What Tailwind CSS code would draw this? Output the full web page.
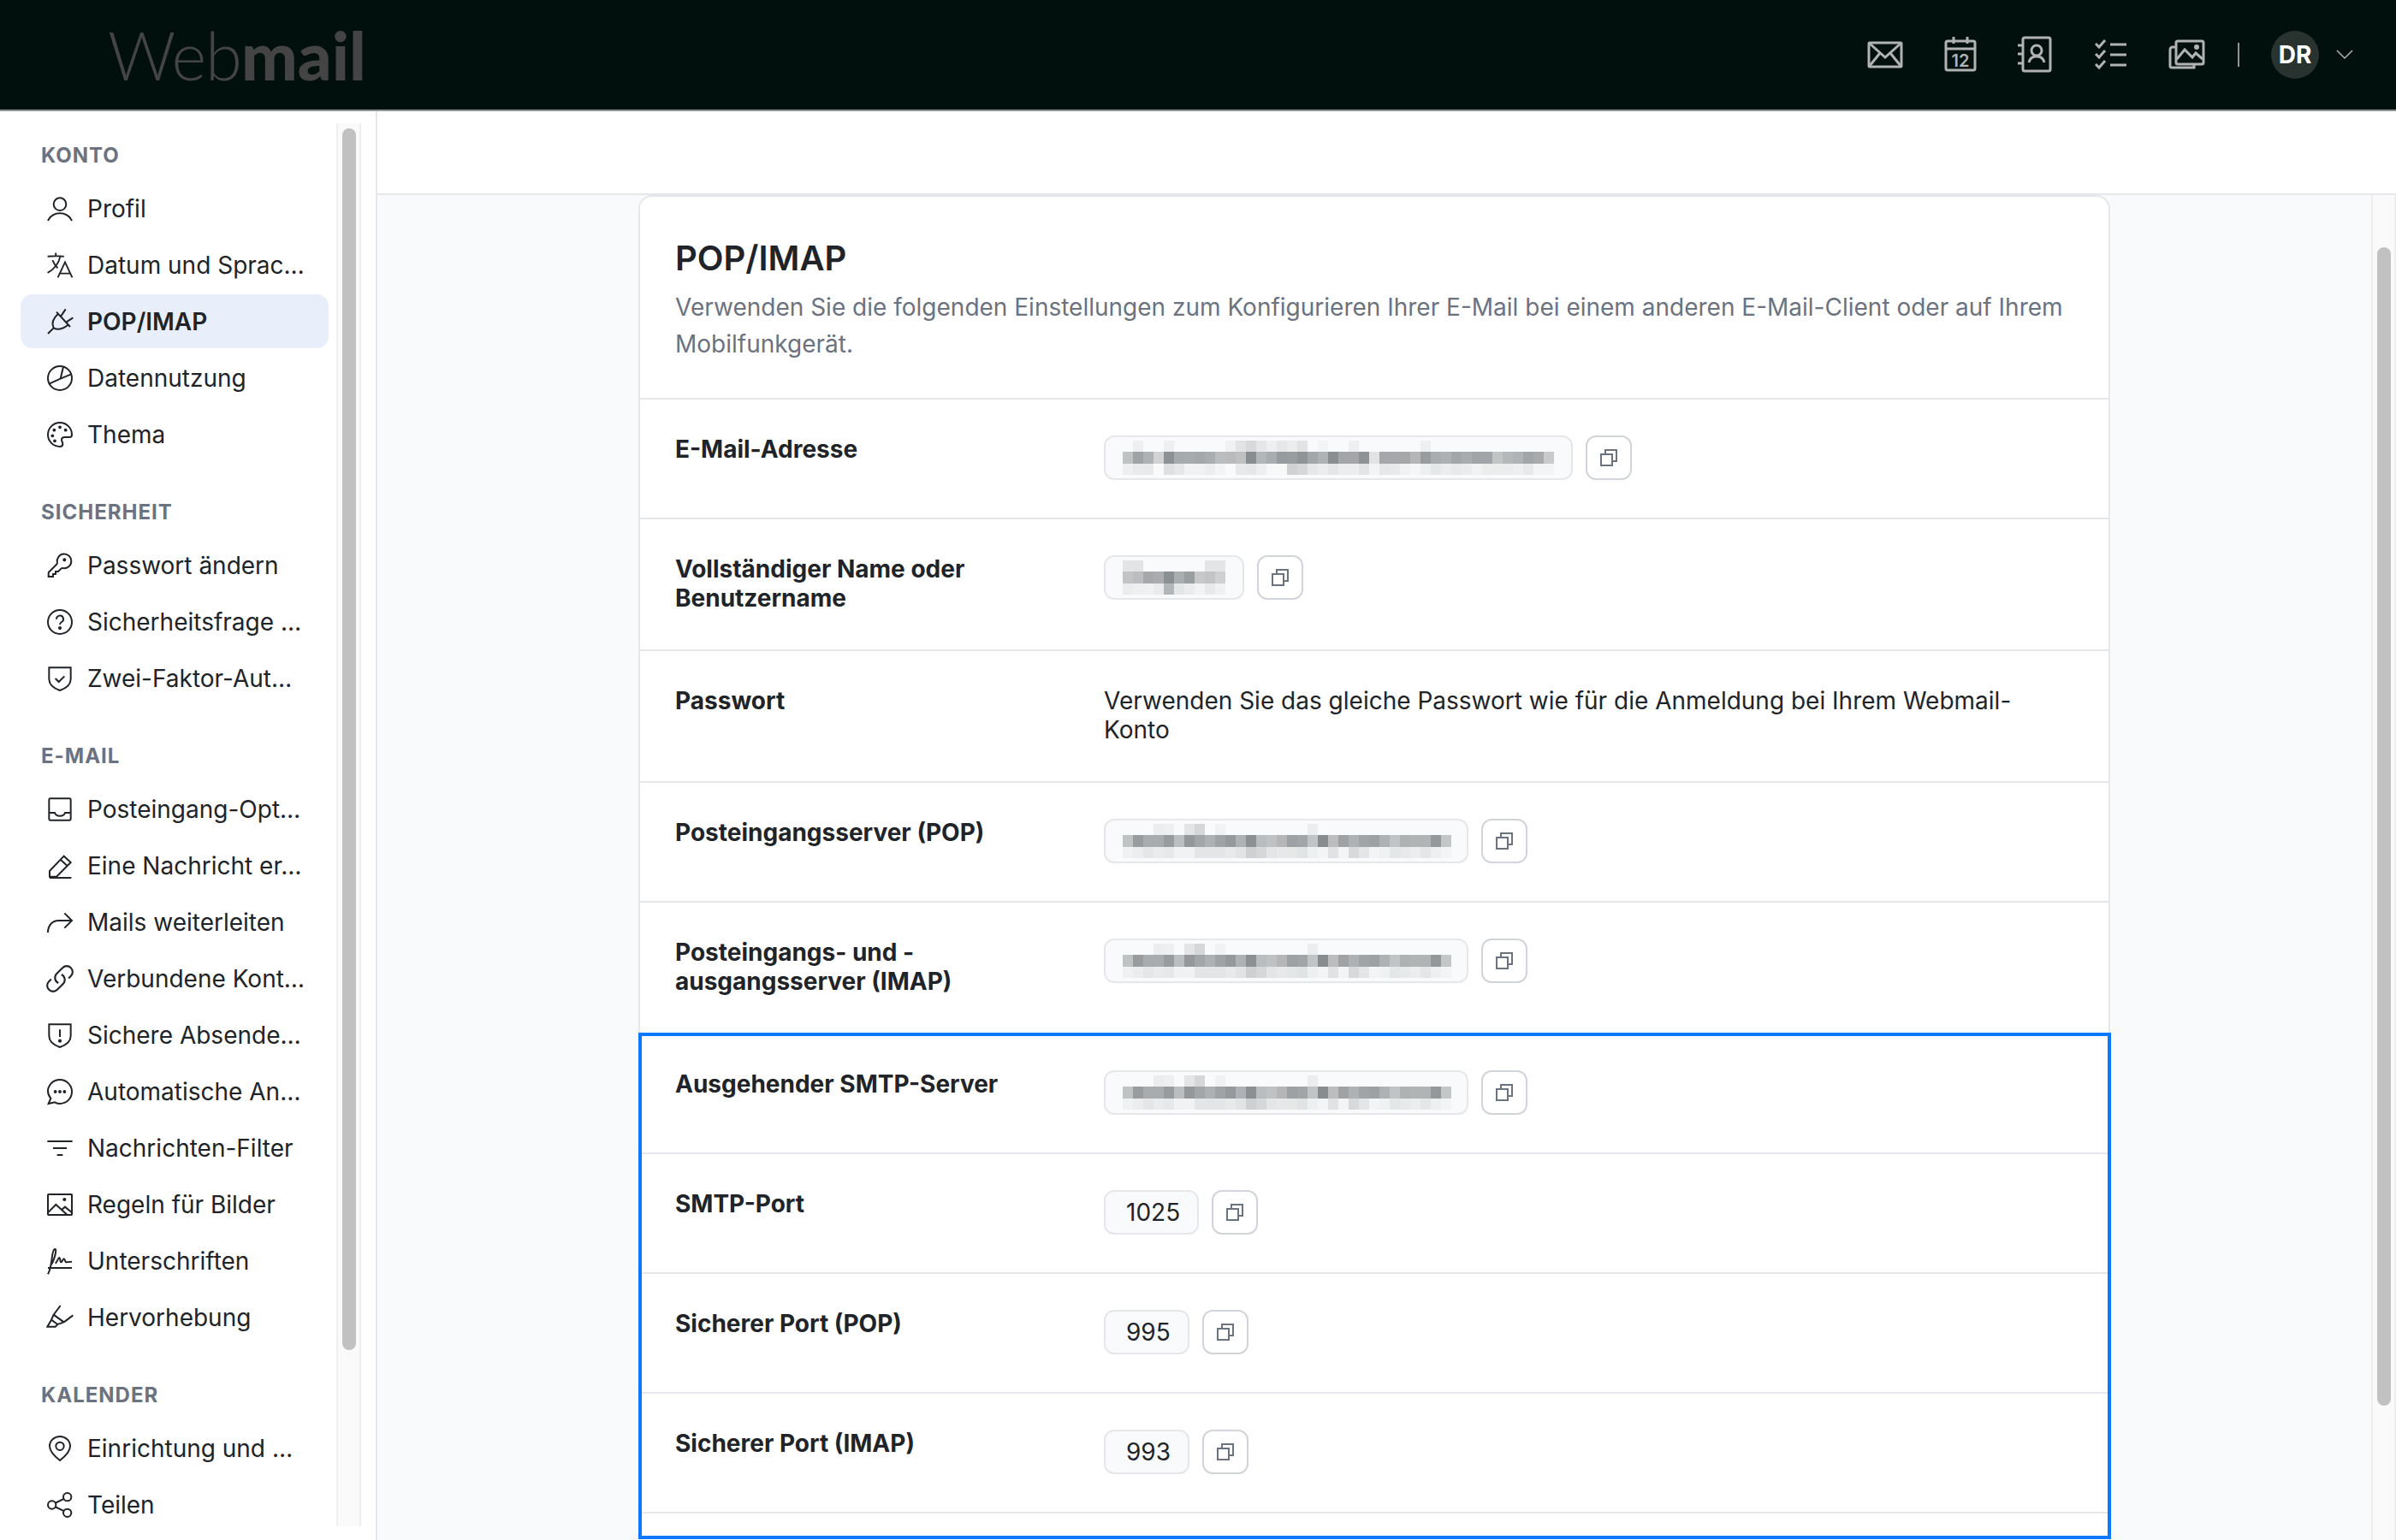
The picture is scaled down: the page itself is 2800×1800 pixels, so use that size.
<!DOCTYPE html>
<html lang="de">
<head>
  <meta charset="UTF-8" />
  <title>Webmail - POP/IMAP</title>
  <script src="https://cdn.jsdelivr.net/npm/@tailwindcss/browser@4"></script>
</head>
<body class="h-screen overflow-hidden flex flex-col bg-white text-[#202428] font-['Inter',sans-serif]">
  <header class="h-[130px] shrink-0 flex items-center justify-between bg-[#010f0d] border-b-2 border-[#8f9492] pl-[126px] pr-[50px]">
    <div class="text-[#444444] text-[78px] leading-none font-['Lato',sans-serif] tracking-[-1px]"><span class="font-light">Web</span><span class="font-black tracking-[0px]">mail</span></div>
    <div class="flex items-center">
      <div class="flex items-center gap-[44px] text-[#b0b3b1]">
        <svg width="44" height="44" viewBox="0 0 44 44" fill="none" stroke="currentColor" stroke-width="3"><rect x="3" y="8" width="38" height="28" rx="1"/><path d="M3 8l19 17L41 8M3 36l13-16M41 36L28 20"/></svg>
        <svg width="44" height="44" viewBox="0 0 44 44" fill="none" stroke="currentColor" stroke-width="3"><rect x="5" y="6" width="34" height="34" rx="2"/><path d="M5 15h34M14 1v8M30 1v8"/><text x="22" y="36" text-anchor="middle" font-size="20" font-weight="600" fill="currentColor" stroke="none" font-family="Inter">12</text></svg>
        <svg width="44" height="44" viewBox="0 0 44 44" fill="none" stroke="currentColor" stroke-width="3"><rect x="7" y="2" width="32" height="39" rx="2"/><path d="M1 11h6M1 21h6M1 32h6M14 31c1-5 4-7 9-7s8 2 9 7"/><circle cx="23" cy="17" r="6"/></svg>
        <svg width="44" height="44" viewBox="0 0 44 44" fill="none" stroke="currentColor" stroke-width="3"><path d="M4 9l4 4 7-8M4 21l4 4 7-8M4 33l4 4 7-8M21 10h19M21 22h19M21 34h19"/></svg>
        <svg width="44" height="44" viewBox="0 0 44 44" fill="none" stroke="currentColor" stroke-width="3"><rect x="10" y="6" width="32" height="27" rx="2"/><path d="M10 13H6a3 3 0 0 0-3 3v19a2 2 0 0 0 2 2h26v-4M11 27l9-11 9 9 4-5 8 7"/><circle cx="34" cy="13" r="1.5"/></svg>
      </div>
      <div class="w-[2px] h-[28px] bg-[#8f9492] ml-[38px] mr-[37px]"></div>
      <div class="w-[56px] h-[56px] rounded-full bg-[#283330] flex items-center justify-center text-white text-[28px] font-bold">DR</div>
      <svg class="ml-[20px]" width="20" height="12" viewBox="0 0 20 12" fill="none" stroke="#b0b3b1" stroke-width="1.5"><path d="M1 1l9 9 9-9"/></svg>
    </div>
  </header>

  <div class="flex-1 flex min-h-0">
    <aside class="w-[441px] shrink-0 flex border-r-2 border-[#e5e7eb] overflow-hidden">
      <nav class="w-[393px] shrink-0 pt-[36px] pl-[24px] text-[28px]">
        <h3 class="h-[32px] leading-[32px] pl-[24px] mb-[14px] text-[24px] font-bold tracking-[1px] text-[#6b7280]">KONTO</h3>
        <ul class="flex flex-col gap-[3px] w-[360px]">
          <li class="h-[63px] flex items-center gap-[16px] pl-[30px]"><svg class="shrink-0" width="32" height="32" viewBox="0 0 24 24" fill="none" stroke="currentColor" stroke-width="1.5"><circle cx="12" cy="8" r="5.5"/><path d="M1.5 22.5c2-4 5.5-6.5 10.5-6.5s8.500 2.500 10.500 6.500"/></svg><span class="whitespace-nowrap">Profil</span></li>
          <li class="h-[63px] flex items-center gap-[16px] pl-[30px]"><svg class="shrink-0" width="32" height="32" viewBox="2.500 2 19 20" fill="none" stroke="currentColor" stroke-width="1.2"><path d="M10.500 21l5.250-11.250L21 21m-9-3h7.500M3 5.621a48.474 48.474 0 016-.371m0 0c1.120 0 2.233.038 3.334.114M9 5.250V3m3.334 2.364C11.176 10.658 7.690 15.080 3 17.502m9.334-12.138c.896.061 1.785.147 2.666.257m-4.589 8.495a18.023 18.023 0 01-3.827-5.802"/></svg><span class="whitespace-nowrap">Datum und Sprac…</span></li>
          <li class="h-[63px] flex items-center gap-[16px] pl-[30px] rounded-[14px] bg-[#e8effa] font-semibold"><svg class="shrink-0" width="32" height="32" viewBox="0 0 24 24" fill="none" stroke="currentColor" stroke-width="1.5"><path d="M1.500 22.500L6.500 17.500M9 3.500l12 13M17 1l-4 6M23.500 8.500l-6 4M10.500 5C6 9 4.500 13.500 6.500 17.500c4 2 8.500 1 13-3"/></svg><span class="whitespace-nowrap">POP/IMAP</span></li>
          <li class="h-[63px] flex items-center gap-[16px] pl-[30px]"><svg class="shrink-0" width="32" height="32" viewBox="0 0 24 24" fill="none" stroke="currentColor" stroke-width="1.5"><circle cx="12" cy="12" r="10.500"/><path d="M15 2l-2.500 10.500L22 8.500M12.500 12.500L2.500 17"/></svg><span class="whitespace-nowrap">Datennutzung</span></li>
          <li class="h-[63px] flex items-center gap-[16px] pl-[30px]"><svg class="shrink-0" width="32" height="32" viewBox="0 0 24 24" fill="none" stroke="currentColor" stroke-width="1.5"><path d="M12 1.500C6.200 1.500 1.500 6.200 1.500 12S6.200 22.500 12 22.500c1.500 0 2.500-1 2.500-2.300 0-1.700-1-2.200-1-3.700 0-1.500 1.200-2.300 2.800-2.300h4.200c1.300 0 2-.8 2-2.200 0-5.800-4.700-10.500-10.500-10.500z"/><circle cx="7" cy="8" r=".7" fill="currentColor"/><circle cx="12" cy="5.500" r=".7" fill="currentColor"/><circle cx="17" cy="8" r=".7" fill="currentColor"/><circle cx="5.500" cy="13" r=".7" fill="currentColor"/><circle cx="7.500" cy="17.500" r=".7" fill="currentColor"/></svg><span class="whitespace-nowrap">Thema</span></li>
        </ul>
        <h3 class="h-[32px] leading-[32px] pl-[24px] mt-[44px] mb-[14px] text-[24px] font-bold tracking-[1px] text-[#6b7280]">SICHERHEIT</h3>
        <ul class="flex flex-col gap-[3px] w-[360px]">
          <li class="h-[63px] flex items-center gap-[16px] pl-[30px]"><svg class="shrink-0" width="32" height="32" viewBox="0 0 24 24" fill="none" stroke="currentColor" stroke-width="1.5"><path d="M22 8.250a6.250 6.250 0 01-7.300 6.100c-.6-.1-1.200 0-1.600.4l-2.600 2.500H8.250v2.250H6v2.250H2v-2.800c0-.6.200-1.200.7-1.600l6.500-6.500c.4-.4.500-1 .4-1.600A6.250 6.250 0 1122 8.250z"/><circle cx="16" cy="7" r=".8" fill="currentColor"/></svg><span class="whitespace-nowrap">Passwort ändern</span></li>
          <li class="h-[63px] flex items-center gap-[16px] pl-[30px]"><svg class="shrink-0" width="32" height="32" viewBox="0 0 24 24" fill="none" stroke="currentColor" stroke-width="1.5"><circle cx="12" cy="12" r="10.500"/><path d="M9 9.500a3 3 0 1 1 4.500 2.500c-1 .6-1.500 1.200-1.500 2.200"/><circle cx="12" cy="17.300" r=".8" fill="currentColor"/></svg><span class="whitespace-nowrap">Sicherheitsfrage …</span></li>
          <li class="h-[63px] flex items-center gap-[16px] pl-[30px]"><svg class="shrink-0" width="32" height="32" viewBox="0 0 24 24" fill="none" stroke="currentColor" stroke-width="1.5"><path d="M2.500 2.500h19v10c0 4.500-4 8-9.500 10-5.500-2-9.500-5.500-9.500-10z"/><path d="M8 12l3 3 5-5"/></svg><span class="whitespace-nowrap">Zwei-Faktor-Aut…</span></li>
        </ul>
        <h3 class="h-[32px] leading-[32px] pl-[24px] mt-[44px] mb-[14px] text-[24px] font-bold tracking-[1px] text-[#6b7280]">E-MAIL</h3>
        <ul class="flex flex-col gap-[3px] w-[360px]">
          <li class="h-[63px] flex items-center gap-[16px] pl-[30px]"><svg class="shrink-0" width="32" height="32" viewBox="0 0 24 24" fill="none" stroke="currentColor" stroke-width="1.5"><rect x="2.500" y="2.500" width="19" height="19" rx="1"/><path d="M2.500 15h5c.5 1.800 2 2.800 4.500 2.800s4-1 4.500-2.800h5"/></svg><span class="whitespace-nowrap">Posteingang-Opt…</span></li>
          <li class="h-[63px] flex items-center gap-[16px] pl-[30px]"><svg class="shrink-0" width="32" height="32" viewBox="0 0 24 24" fill="none" stroke="currentColor" stroke-width="1.5"><path d="M3 22.500h19M3 21.500v-5L15.500 3.500l6 5.500L9 21.500zM12.500 6.500l6 5.500"/></svg><span class="whitespace-nowrap">Eine Nachricht er…</span></li>
          <li class="h-[63px] flex items-center gap-[16px] pl-[30px]"><svg class="shrink-0" width="32" height="32" viewBox="0 0 24 24" fill="none" stroke="currentColor" stroke-width="1.5"><path d="M1.500 21c0-6 3.500-10.500 9.500-10.500h11.500M16 4l6.500 6.500L16 17"/></svg><span class="whitespace-nowrap">Mails weiterleiten</span></li>
          <li class="h-[63px] flex items-center gap-[16px] pl-[30px]"><svg class="shrink-0" width="32" height="32" viewBox="1.500 1.500 21 21" fill="none" stroke="currentColor" stroke-width="1.4"><path d="M13.190 8.688a4.500 4.500 0 011.242 7.244l-4.500 4.500a4.500 4.500 0 01-6.364-6.364l1.757-1.757m13.350-.622l1.757-1.757a4.500 4.500 0 00-6.364-6.364l-4.500 4.500a4.500 4.500 0 001.242 7.244"/></svg><span class="whitespace-nowrap">Verbundene Kont…</span></li>
          <li class="h-[63px] flex items-center gap-[16px] pl-[30px]"><svg class="shrink-0" width="32" height="32" viewBox="0 0 24 24" fill="none" stroke="currentColor" stroke-width="1.5"><path d="M2.500 2.500h19v10c0 4.500-4 8-9.500 10-5.500-2-9.500-5.500-9.500-10z"/><path d="M12 7v6.500"/><circle cx="12" cy="17" r=".8" fill="currentColor"/></svg><span class="whitespace-nowrap">Sichere Absende…</span></li>
          <li class="h-[63px] flex items-center gap-[16px] pl-[30px]"><svg class="shrink-0" width="32" height="32" viewBox="0 0 24 24" fill="none" stroke="currentColor" stroke-width="1.5"><path d="M12 1.500C6.200 1.500 1.500 6 1.500 11.500c0 2.500 1 4.700 2.500 6.300l-2 4.700 5.500-1.300c1.400.8 3 1.300 4.500 1.300 5.800 0 10.500-4.700 10.500-10.500S17.800 1.500 12 1.500z"/><circle cx="8" cy="12" r=".7" fill="currentColor"/><circle cx="12" cy="12" r=".7" fill="currentColor"/><circle cx="16" cy="12" r=".7" fill="currentColor"/></svg><span class="whitespace-nowrap">Automatische An…</span></li>
          <li class="h-[63px] flex items-center gap-[16px] pl-[30px]"><svg class="shrink-0" width="32" height="32" viewBox="0 0 24 24" fill="none" stroke="currentColor" stroke-width="1.5"><path d="M1 6h22M6 12h12M9.500 18h5"/></svg><span class="whitespace-nowrap">Nachrichten-Filter</span></li>
          <li class="h-[63px] flex items-center gap-[16px] pl-[30px]"><svg class="shrink-0" width="32" height="32" viewBox="0 0 24 24" fill="none" stroke="currentColor" stroke-width="1.5"><rect x="1.500" y="3" width="21" height="18" rx=".5"/><path d="M1.500 19l7-7 10 9M13.500 16.500l3-2.500 6 5"/><circle cx="16" cy="7.500" r=".8" fill="currentColor"/></svg><span class="whitespace-nowrap">Regeln für Bilder</span></li>
          <li class="h-[63px] flex items-center gap-[16px] pl-[30px]"><svg class="shrink-0" width="32" height="32" viewBox="0 0 24 24" fill="none" stroke="currentColor" stroke-width="1.5"><path d="M1.500 23.500C3.500 20 4.500 14 5 9.500 5.500 5 6 2 7.500 1.500 9 1 8.500 5 7 9.500 6 12.500 4.500 15 4 15.500M8 14c1.500-1 2.500-5 3.500-5s.5 4 1.500 4 1.500-3 2.500-3 1 3 2 3 2-.5 5-.5M1.500 18h21"/></svg><span class="whitespace-nowrap">Unterschriften</span></li>
          <li class="h-[63px] flex items-center gap-[16px] pl-[30px]"><svg class="shrink-0" width="32" height="32" viewBox="0 0 24 24" fill="none" stroke="currentColor" stroke-width="1.5"><path d="M12.500 1.500l-6 8 9 6.500M6.500 9.500l-2 4.500 5.500 4 5.500-2M4.500 14L1 20h7l2-2M15.500 16l8-6"/></svg><span class="whitespace-nowrap">Hervorhebung</span></li>
        </ul>
        <h3 class="h-[32px] leading-[32px] pl-[24px] mt-[44px] mb-[14px] text-[24px] font-bold tracking-[1px] text-[#6b7280]">KALENDER</h3>
        <ul class="flex flex-col gap-[3px] w-[360px]">
          <li class="h-[63px] flex items-center gap-[16px] pl-[30px]"><svg class="shrink-0" width="32" height="32" viewBox="0 0 24 24" fill="none" stroke="currentColor" stroke-width="1.5"><path d="M12 1.500c-5 0-9 3.800-9 8.500 0 4.500 4.500 9 9 12.500 4.500-3.500 9-8 9-12.500 0-4.700-4-8.500-9-8.500z"/><circle cx="12" cy="10" r="3.500"/></svg><span class="whitespace-nowrap">Einrichtung und …</span></li>
          <li class="h-[63px] flex items-center gap-[16px] pl-[30px]"><svg class="shrink-0" width="32" height="32" viewBox="0 0 24 24" fill="none" stroke="currentColor" stroke-width="1.5"><circle cx="5" cy="12" r="3.500"/><circle cx="18.500" cy="5" r="3.500"/><circle cx="18.500" cy="19" r="3.500"/><path d="M8 10.300l7.500-3.700M8 13.700l7.500 3.700"/></svg><span class="whitespace-nowrap">Teilen</span></li>
        </ul>
      </nav>
      <div class="w-[29px] shrink-0 mt-[14px] mb-[16px] pl-[5px] bg-[#fafafa] border-x-2 border-[#eeeeee]">
        <div class="w-[16px] h-[1428px] mt-[6px] rounded-full bg-[#c1c1c1]"></div>
      </div>
    </aside>

    <div class="flex-1 min-w-0 flex flex-col">
      <div class="h-[98px] shrink-0 bg-white border-b-2 border-[#e5e7eb]"></div>
      <div class="flex-1 min-h-0 flex bg-[#f9fafb]">
        <main class="flex-1 min-w-0 overflow-hidden">
          <div class="w-[1720px] mx-auto bg-white border-x-2 border-t-2 border-[#e5e7eb] rounded-t-[16px]">
            <div class="h-[235px] pt-[46px] px-[41px]">
              <h1 class="text-[40px] leading-[52px] font-semibold">POP/IMAP</h1>
              <p class="mt-[10px] text-[28px] leading-[43px] text-[#6b7280]">Verwenden Sie die folgenden Einstellungen zum Konfigurieren Ihrer E-Mail bei einem anderen E-Mail-Client oder auf Ihrem Mobilfunkgerät.</p>
            </div>

            <div class="grid grid-cols-[501px_1fr] border-t-2 border-[#e5e7eb] py-[42px] px-[41px] text-[28px] leading-[34px]">
              <div class="font-bold -mt-[1px] mb-[1px]">E-Mail-Adresse</div>
              <div class="flex items-start gap-[15px] min-h-[54px]">
                <div class="h-[52px] flex border-2 border-[#e5e7eb] bg-[#f9fafb] rounded-[12px] px-[20px] py-[4px]"><svg data-blur="mail" height="40"></svg></div>
                <button class="w-[54px] h-[52px] flex items-center justify-center border-2 border-[#d1d5db] rounded-[12px] bg-white text-[#6b7280]"><svg width="20" height="20" viewBox="0 0 20 20" fill="none" stroke="currentColor" stroke-width="2"><rect x="1" y="6" width="13" height="13"/><path d="M6 6V1h13v13h-5"/></svg></button>
              </div>
            </div>

            <div class="grid grid-cols-[501px_1fr] border-t-2 border-[#e5e7eb] py-[42px] px-[41px] text-[28px] leading-[34px]">
              <div class="font-bold -mt-[1px] mb-[1px]">Vollständiger Name oder<br />Benutzername</div>
              <div class="flex items-start gap-[15px] min-h-[54px]">
                <div class="h-[52px] flex border-2 border-[#e5e7eb] bg-[#f9fafb] rounded-[12px] px-[20px] py-[4px]"><svg data-blur="name" height="40"></svg></div>
                <button class="w-[54px] h-[52px] flex items-center justify-center border-2 border-[#d1d5db] rounded-[12px] bg-white text-[#6b7280]"><svg width="20" height="20" viewBox="0 0 20 20" fill="none" stroke="currentColor" stroke-width="2"><rect x="1" y="6" width="13" height="13"/><path d="M6 6V1h13v13h-5"/></svg></button>
              </div>
            </div>

            <div class="grid grid-cols-[501px_1fr] border-t-2 border-[#e5e7eb] py-[42px] px-[41px] text-[28px] leading-[34px]">
              <div class="font-bold -mt-[1px] mb-[1px]">Passwort</div>
              <div class="-mt-[1px] mb-[1px]">Verwenden Sie das gleiche Passwort wie für die Anmeldung bei Ihrem Webmail-Konto</div>
            </div>

            <div class="grid grid-cols-[501px_1fr] border-t-2 border-[#e5e7eb] py-[42px] px-[41px] text-[28px] leading-[34px]">
              <div class="font-bold -mt-[1px] mb-[1px]">Posteingangsserver (POP)</div>
              <div class="flex items-start gap-[15px] min-h-[54px]">
                <div class="h-[52px] flex border-2 border-[#e5e7eb] bg-[#f9fafb] rounded-[12px] pl-[20px] pr-[18px] py-[4px]"><svg data-blur="server" height="40"></svg></div>
                <button class="w-[54px] h-[52px] flex items-center justify-center border-2 border-[#d1d5db] rounded-[12px] bg-white text-[#6b7280]"><svg width="20" height="20" viewBox="0 0 20 20" fill="none" stroke="currentColor" stroke-width="2"><rect x="1" y="6" width="13" height="13"/><path d="M6 6V1h13v13h-5"/></svg></button>
              </div>
            </div>

            <div class="grid grid-cols-[501px_1fr] border-t-2 border-[#e5e7eb] py-[42px] px-[41px] text-[28px] leading-[34px]">
              <div class="font-bold -mt-[1px] mb-[1px]">Posteingangs- und -<br />ausgangsserver (IMAP)</div>
              <div class="flex items-start gap-[15px] min-h-[54px]">
                <div class="h-[52px] flex border-2 border-[#e5e7eb] bg-[#f9fafb] rounded-[12px] pl-[20px] pr-[18px] py-[4px]"><svg data-blur="server" height="40"></svg></div>
                <button class="w-[54px] h-[52px] flex items-center justify-center border-2 border-[#d1d5db] rounded-[12px] bg-white text-[#6b7280]"><svg width="20" height="20" viewBox="0 0 20 20" fill="none" stroke="currentColor" stroke-width="2"><rect x="1" y="6" width="13" height="13"/><path d="M6 6V1h13v13h-5"/></svg></button>
              </div>
            </div>

            <!-- highlighted SMTP block -->
            <div class="relative">
              <div class="absolute top-0 -left-[2px] -right-[3px] h-[592px] border-4 border-[#0a78ff] z-10"></div>

              <div class="grid grid-cols-[501px_1fr] border-t-2 border-[#e5e7eb] py-[42px] px-[41px] text-[28px] leading-[34px]">
                <div class="font-bold -mt-[1px] mb-[1px]">Ausgehender SMTP-Server</div>
                <div class="flex items-start gap-[15px] min-h-[54px]">
                  <div class="h-[52px] flex border-2 border-[#e5e7eb] bg-[#f9fafb] rounded-[12px] pl-[20px] pr-[18px] py-[4px]"><svg data-blur="server" height="40"></svg></div>
                  <button class="w-[54px] h-[52px] flex items-center justify-center border-2 border-[#d1d5db] rounded-[12px] bg-white text-[#6b7280]"><svg width="20" height="20" viewBox="0 0 20 20" fill="none" stroke="currentColor" stroke-width="2"><rect x="1" y="6" width="13" height="13"/><path d="M6 6V1h13v13h-5"/></svg></button>
                </div>
              </div>

              <div class="grid grid-cols-[501px_1fr] border-t-2 border-[#e5e7eb] py-[42px] px-[41px] text-[28px] leading-[34px]">
                <div class="font-bold -mt-[1px] mb-[1px]">SMTP-Port</div>
                <div class="flex items-start gap-[15px] min-h-[54px]">
                  <div class="h-[52px] flex items-center border-2 border-[#e5e7eb] bg-[#f9fafb] rounded-[12px] pl-[24px] pr-[20px]">1025</div>
                  <button class="w-[54px] h-[52px] flex items-center justify-center border-2 border-[#d1d5db] rounded-[12px] bg-white text-[#6b7280]"><svg width="20" height="20" viewBox="0 0 20 20" fill="none" stroke="currentColor" stroke-width="2"><rect x="1" y="6" width="13" height="13"/><path d="M6 6V1h13v13h-5"/></svg></button>
                </div>
              </div>

              <div class="grid grid-cols-[501px_1fr] border-t-2 border-[#e5e7eb] py-[42px] px-[41px] text-[28px] leading-[34px]">
                <div class="font-bold -mt-[1px] mb-[1px]">Sicherer Port (POP)</div>
                <div class="flex items-start gap-[15px] min-h-[54px]">
                  <div class="h-[52px] flex items-center border-2 border-[#e5e7eb] bg-[#f9fafb] rounded-[12px] pl-[24px] pr-[20px]">995</div>
                  <button class="w-[54px] h-[52px] flex items-center justify-center border-2 border-[#d1d5db] rounded-[12px] bg-white text-[#6b7280]"><svg width="20" height="20" viewBox="0 0 20 20" fill="none" stroke="currentColor" stroke-width="2"><rect x="1" y="6" width="13" height="13"/><path d="M6 6V1h13v13h-5"/></svg></button>
                </div>
              </div>

              <div class="grid grid-cols-[501px_1fr] border-t-2 border-[#e5e7eb] py-[42px] px-[41px] text-[28px] leading-[34px]">
                <div class="font-bold -mt-[1px] mb-[1px]">Sicherer Port (IMAP)</div>
                <div class="flex items-start gap-[15px] min-h-[54px]">
                  <div class="h-[52px] flex items-center border-2 border-[#e5e7eb] bg-[#f9fafb] rounded-[12px] pl-[24px] pr-[20px]">993</div>
                  <button class="w-[54px] h-[52px] flex items-center justify-center border-2 border-[#d1d5db] rounded-[12px] bg-white text-[#6b7280]"><svg width="20" height="20" viewBox="0 0 20 20" fill="none" stroke="currentColor" stroke-width="2"><rect x="1" y="6" width="13" height="13"/><path d="M6 6V1h13v13h-5"/></svg></button>
                </div>
              </div>

              <div class="h-[60px] border-t-2 border-[#e5e7eb]"></div>
            </div>
          </div>
        </main>
        <div class="w-[29px] shrink-0 pl-[5px] bg-[#fafafa] border-x-2 border-[#eeeeee]">
          <div class="w-[16px] h-[1354px] mt-[61px] rounded-full bg-[#c1c1c1]"></div>
        </div>
      </div>
    </div>
  </div>

  <script>
    // redacted values in the reference are coarse pixel blocks, three bands high
    const blurData = {
      mail: [
        '- eeeff0 - - eeeff0 - - - - - f0f1f2 e2e3e4 d8d9da e5e6e7 eeeff0 e6e7e8 ebecec e2e3e4 - f3f4f5 - - eeeff0 - - - - - - eeeff0 - - - - - - - - - - - -',
        'bfc3c3 9fa3a5 aeb2b2 d2d3d4 8c9194 a5aaad a8abae a5a8ab a9adaf bbbdbe b9bbbc bfc1c1 888d8f b3b7ba a8adaf 979b9e 9a9da0 8f9497 a3a7a9 aeb2b4 8a8e90 a4a5a8 a3a5a7 8e9396 e2e3e4 a5a7a9 a6a8ab a5a7a9 b5b6b8 989c9f aaadb0 aeb1b3 a2a6a8 a8acae a1a5a7 a1a5a7 c1c5c6 b5b8ba b0b2b3 a2a5a7 a8aaac c8cacb',
        'eeeff0 e9eaeb e9eaeb fafafb dfe0e1 e6e8e8 f1f2f3 f1f2f3 ecedee f3f4f5 f9fafb e8e9ea e6e7e8 eeeff0 f7f8f8 f7f8f8 d0d1d2 d6d7d8 e6e7e8 ecedee e5e6e7 ecedee ecedee e3e4e5 f3f4f5 e6e7e8 e8e9ea f1f2f3 f5f6f7 eeeff0 e5e8e8 ecedee e8e9ea ebecec f1f2f3 eceeee ebecec ebecec eeeff0 e8e9ea f3f4f5 f3f4f5'
      ],
      name: [
        'e2e4e5 e2e4e5 - - - - - - e4e5e6 e4e5e6',
        'c2c4c5 bcbdbe a6a8ab aaacaf 8b9093 a9aeae 999ea1 c8c9ca c2c4c5 cfd0d1',
        'ebecec eeeff0 f0f1f2 eaebec b2b6b8 e5e6e7 ebecec f2f3f4 e8e9ea f0f1f2'
      ],
      server: [
        '- - - ecedef eeeff0 - e4e5e6 d6d7d8 - f0f2f3 - - - - - - - - ecedee - - - - - - - - - - - - -',
        'bfc3c4 989c9f aaabad a8acae 989c9f bcbdbe 94989b a2a6a8 adb1b3 9fa3a5 96999c aeb2b4 8c9093 b9bdc0 bfc2c3 b4b6b8 9da1a4 a1a5a7 c0c4c4 888c8f bcbdbe a0a2a5 afb2b3 a0a4a7 9ea1a4 aeb2b4 c0c4c4 aeb2b3 b0b4b4 b0b4b4 94989b c3c7c7',
        'f0f1f3 ecedee e5e6e7 eaebec e7e8e9 f1f2f3 f1f2f3 e4e5e7 e4e5e7 e4e5e7 e8eaea e2e3e4 cfd0d1 d6d7d8 e4e5e6 e7e8e9 e6e8e8 e1e4e4 eeeff0 f3f4f5 e1e2e3 f3f4f5 d8d9da e4e5e6 f3f4f5 f0f1f2 e4e7e7 e8e9ea ecedee e5e6e7 eeeff0 f3f4f5'
      ]
    };

    document.querySelectorAll('svg[data-blur]').forEach(svg => {
      const bands = blurData[svg.dataset.blur];
      const cols = bands[1].split(' ').length;
      svg.setAttribute('width', cols * 12);
      svg.setAttribute('viewBox', `0 0 ${cols * 12} 40`);
      svg.setAttribute('shape-rendering', 'crispEdges');
      bands.forEach((band, row) => {
        band.split(' ').forEach((colour, col) => {
          if (colour === '-') return;
          const rect = document.createElementNS('http://www.w3.org/2000/svg', 'rect');
          rect.setAttribute('x', col * 12);
          rect.setAttribute('y', [0, 13, 27][row]);
          rect.setAttribute('width', 12);
          rect.setAttribute('height', 13 + (row === 1 ? 1 : 0));
          rect.setAttribute('fill', '#' + colour);
          svg.appendChild(rect);
        });
      });
    });
  </script>
</body>
</html>
